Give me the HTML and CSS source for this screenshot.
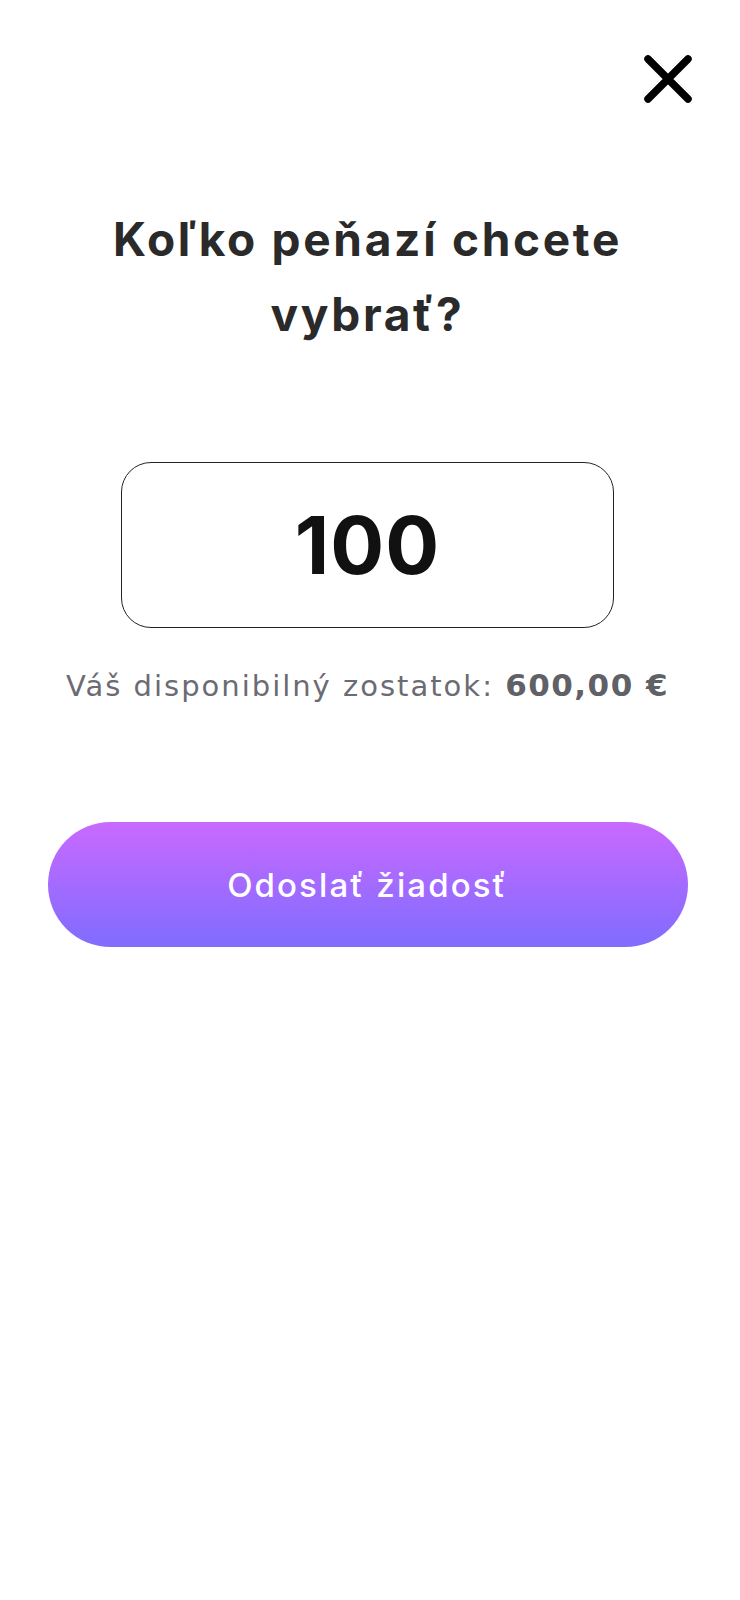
FILE: index.html
```html
<!DOCTYPE html>
<html lang="sk">
<head>
<meta charset="utf-8">
<title>Výber peňazí</title>
<link rel="stylesheet" href="styles.css">
</head>
<body>
<div class="screen">
  <div class="topbar">
    <button class="close" aria-label="Zavrieť">
      <svg width="50" height="50" viewBox="0 0 50 50"><path d="M5 5 L45 45 M45 5 L5 45" stroke="#000" stroke-width="7.5" stroke-linecap="round" fill="none"/></svg>
    </button>
  </div>
  <h1 class="title">Koľko peňazí chcete<br>vybrať?</h1>
  <div class="amount-box"><span class="amount">100</span></div>
  <p class="balance">Váš disponibilný zostatok: <strong>600,00 €</strong></p>
  <button class="submit">Odoslať žiadosť</button>
</div>
</body>
</html>
```
FILE: styles.css
```css
* { box-sizing: border-box; }
html, body { margin: 0; padding: 0; background: #fff; }
body { font-family: Inter, "Noto Sans", sans-serif; }
.screen { width: 740px; min-height: 1600px; padding-right: 5px; display: flex; flex-direction: column; align-items: center; }
.topbar { align-self: stretch; display: flex; justify-content: flex-end; padding: 54px 42px 0 0; }
.close { border: 0; background: none; padding: 0; width: 50px; height: 50px; display: block; }
.close svg { display: block; }
.title { margin: 98px 0 0; font-size: 46px; line-height: 75px; font-weight: 700; color: #2a2a2a; text-align: center; letter-spacing: 2.7px; }
.amount-box { margin-top: 110px; width: 493px; height: 166px; border: 1.5px solid #222; border-radius: 30px; display: flex; align-items: center; justify-content: center; }
.amount { font-size: 80px; font-weight: 700; color: #111; line-height: 1; letter-spacing: 1px; }
.balance { margin: 37px 0 0; font-family: "DejaVu Sans", sans-serif; font-size: 29px; line-height: 40px; color: #6b6b73; font-weight: 400; letter-spacing: 2px; white-space: nowrap; }
.balance strong { font-size: 31px; font-weight: 700; color: #606067; letter-spacing: 1.5px; }
.submit { margin-top: 116px; width: 640px; height: 125px; border: 0; border-radius: 63px; background: linear-gradient(180deg, #c969ff 0%, #7f6cff 100%); color: #fff; font-family: inherit; font-size: 33px; font-weight: 500; letter-spacing: 2.1px; }
```
